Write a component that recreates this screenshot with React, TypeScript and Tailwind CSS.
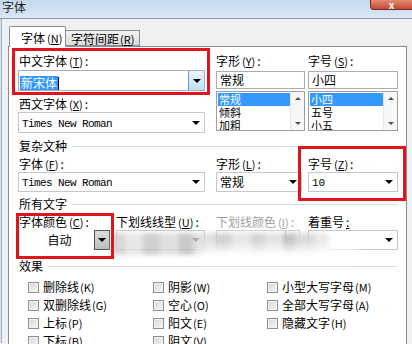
import React from 'react';

const cjk = "font-['Noto_Sans_CJK_SC','Noto_Sans_CJK_JP',sans-serif]";
const mono = "font-['Liberation_Mono',monospace]";

function Label({ text, k, colon = true, disabled = false }: { text: string; k?: string; colon?: boolean; disabled?: boolean }) {
  return (
    <div className={`h-[14px] leading-[14px] text-[12px] whitespace-nowrap ${disabled ? 'text-[#a0a0a0]' : 'text-black'}`}>
      {text}
      {k && (
        <span className="text-[11px] ml-[2px]">
          (<span className="underline">{k}</span>)
        </span>
      )}
      {colon && <span className="ml-[2px]">:</span>}
    </div>
  );
}

function Arrow() {
  return <span className="block w-0 h-0 border-l-[4px] border-r-[4px] border-t-[4px] border-l-transparent border-r-transparent border-t-black" />;
}

function UpArrow() {
  return <span className="block w-0 h-0 border-l-[3px] border-r-[3px] border-b-[3px] border-l-transparent border-r-transparent border-b-[#505050]" />;
}

function DownArrow() {
  return <span className="block w-0 h-0 border-l-[3px] border-r-[3px] border-t-[3px] border-l-transparent border-r-transparent border-t-[#505050]" />;
}

function Combo({ children, h = 'h-[20px]', className = '' }: { children?: React.ReactNode; h?: string; className?: string }) {
  return (
    <div className={`flex items-center ${h} border border-[#c5c7cc] bg-white ${className}`}>
      <div className="flex-1 pl-[3px] text-[12px] leading-[14px] overflow-hidden whitespace-nowrap">{children}</div>
      <div className="w-[16px] flex justify-center">
        <Arrow />
      </div>
    </div>
  );
}

function ListBox({ items }: { items: string[] }) {
  return (
    <div className="flex h-[40px] border border-[#9a9ea6] bg-white">
      <div className="flex-1 pt-[1px] pl-[1px] overflow-hidden">
        {items.map((it, i) => (
          <div
            key={it}
            className={`h-[13px] leading-[13px] text-[11px] pl-[1px] overflow-hidden ${i === 0 ? 'bg-[#3399ff] text-white' : 'text-black'}`}
          >
            {it}
          </div>
        ))}
      </div>
      <div className="w-[14px] flex flex-col justify-between items-center py-[5px] bg-[#f7f7f7] border-l border-[#e6e6e6]">
        <UpArrow />
        <DownArrow />
      </div>
    </div>
  );
}

function GroupHeader({ text }: { text: string }) {
  return (
    <div className="flex items-center h-[14px] pl-[10px] pr-[9px]">
      <span className="text-[12px] leading-[14px] text-black">{text}</span>
      <span className="flex-1 h-px bg-[#d8dde2] ml-[5px]" />
    </div>
  );
}

function Check({ text, k }: { text: string; k: string }) {
  return (
    <div className="flex items-center h-[18px] gap-[4px]">
      <span className="w-[11px] h-[11px] border border-[#8e8f8f] bg-gradient-to-br from-[#d6d6d6] to-[#f6f6f6] shadow-[inset_0_0_0_1px_#f4f4f4]" />
      <span className="text-[12px] leading-[14px] whitespace-nowrap">
        {text}
        <span className="text-[11px] ml-[1px]">({k})</span>
      </span>
    </div>
  );
}

export default function App() {
  return (
    <div className={`relative w-[412px] h-[344px] overflow-hidden bg-[#f0f0f0] ${cjk}`}>
      {/* title bar */}
      <div className="flex justify-between items-start h-[19px] bg-gradient-to-b from-[#c4d8ee] to-[#dae7f5] border-b border-[#8a9bb0]">
        <span className="pl-[2px] text-[12px] leading-[14px] text-[#1e1e1e]">字体</span>
        <div className="w-[42px] h-[10px] rounded-bl-[4px] bg-gradient-to-b from-[#e48a73] to-[#c24a34] border-l border-b border-[#7a2e22] flex justify-center items-end">
          <span className="text-white text-[10px] leading-[9px] font-bold">x</span>
        </div>
      </div>

      {/* body */}
      <div className="flex h-[324px]">
        <div className="w-[2px] bg-[#d1e1f2] border-r border-[#a8b4c2]" />
        <div className="flex-1 pl-[6px] pr-[5px] pt-[7px] flex flex-col">
          {/* tabs */}
          <div className="flex items-end h-[20px] pl-[1px] relative z-10">
            <div className="w-[57px] h-[21px] bg-white border border-b-0 border-[#898c95] rounded-t-[2px] pl-[11px] pt-[4px] text-[12px] leading-[14px] -mb-px">
              字体<span className="text-[11px] ml-[2px]">(<span className="underline">N</span>)</span>
            </div>
            <div className="w-[74px] h-[16px] bg-gradient-to-b from-[#f2f2f2] to-[#dcdcdc] border border-l-0 border-[#898c95] pl-[5px] text-[12px] leading-[15px]">
              字符间距<span className="text-[11px] ml-[1px]">(<span className="underline">R</span>)</span>
            </div>
          </div>

          {/* panel */}
          <div className="relative flex-1 bg-white border border-[#898c95] border-b-0">
            {/* section A */}
            <div className="flex pt-[7px] pl-[9px]">
              <div className="w-[187px] flex flex-col">
                <div className="pl-[1px]">
                  <Label text="中文字体" k="T" />
                </div>
                <div className="mt-[2px] h-[21px] flex items-center border border-[#abadb3] bg-white">
                  <div className="flex-1 pl-[1px]">
                    <span className="inline-block bg-[#3399ff] text-white text-[12px] leading-[14px] px-[1px]">新宋体</span>
                    <span className="inline-block w-px h-[13px] bg-black align-middle" />
                  </div>
                  <div className="w-[16px] h-[19px] flex justify-center items-center bg-gradient-to-b from-[#e8f5fd] to-[#c1e0f4] border-l border-[#5d9cce]">
                    <Arrow />
                  </div>
                </div>
                <div className="mt-[6px] pl-[1px]">
                  <Label text="西文字体" k="X" />
                </div>
                <Combo h="h-[21px]" className="mt-[1px]">
                  <span className={`${mono} text-[11px] tracking-[-0.6px]`}>Times New Roman</span>
                </Combo>
              </div>

              <div className="w-[89px] ml-[11px] flex flex-col">
                <Label text="字形" k="Y" />
                <div className="mt-[3px] h-[18px] border border-[#abadb3] pl-[3px] text-[12px] leading-[16px]">常规</div>
                <div className="mt-[2px]">
                  <ListBox items={['常规', '倾斜', '加粗']} />
                </div>
              </div>

              <div className="w-[90px] ml-[3px] flex flex-col">
                <Label text="字号" k="S" />
                <div className="mt-[3px] h-[18px] border border-[#abadb3] pl-[3px] text-[12px] leading-[16px]">小四</div>
                <div className="mt-[2px]">
                  <ListBox items={['小四', '五号', '小五']} />
                </div>
              </div>
            </div>

            {/* 复杂文种 */}
            <div className="mt-[6px]">
              <GroupHeader text="复杂文种" />
            </div>
            <div className="flex mt-[4px] pl-[9px]">
              <div className="w-[187px]">
                <div className="pl-[1px]">
                  <Label text="字体" k="F" />
                </div>
                <Combo className="mt-[1px]">
                  <span className={`${mono} text-[11px] tracking-[-0.6px]`}>Times New Roman</span>
                </Combo>
              </div>
              <div className="w-[86px] ml-[11px]">
                <Label text="字形" k="L" />
                <Combo className="mt-[1px]">常规</Combo>
              </div>
              <div className="w-[90px] ml-[6px]">
                <Label text="字号" k="Z" />
                <Combo className="mt-[1px]">
                  <span className={`${mono} text-[11px]`}>10</span>
                </Combo>
              </div>
            </div>

            {/* 所有文字 */}
            <div className="mt-[5px]">
              <GroupHeader text="所有文字" />
            </div>
            <div className="flex mt-[4px] pl-[10px]">
              <div className="w-[91px]">
                <Label text="字体颜色" k="C" />
                <div className="mt-[1px] h-[20px] flex items-center">
                  <div className="flex-1 text-center text-[12px] leading-[14px] pl-[6px]">自动</div>
                  <div className="w-[16px] h-[20px] flex justify-center items-center bg-gradient-to-b from-[#dcdcdc] to-[#bdbdbd] border border-[#555]">
                    <Arrow />
                  </div>
                </div>
              </div>
              <div className="w-[89px] ml-[6px]">
                <Label text="下划线线型" k="U" />
                <Combo className="mt-[1px]" />
              </div>
              <div className="w-[84px] ml-[11px]">
                <Label text="下划线颜色" k="I" disabled />
                <div className="mt-[1px] h-[20px] flex border border-[#d0d0d0]">
                  <div className="flex-1" />
                  <div className="w-[14px] border-l border-[#d0d0d0]" />
                </div>
              </div>
              <div className="w-[90px] ml-[8px]">
                <div className="h-[14px] leading-[14px] text-[12px] whitespace-nowrap">
                  着重号<span className="underline ml-[2px]">:</span>
                </div>
                <Combo className="mt-[1px]" />
              </div>
            </div>

            {/* 效果 */}
            <div className="mt-[9px]">
              <GroupHeader text="效果" />
            </div>
            <div className="flex mt-[5px] pl-[19px]">
              <div className="w-[125px]">
                <Check text="删除线" k="K" />
                <Check text="双删除线" k="G" />
                <Check text="上标" k="P" />
                <Check text="下标" k="B" />
              </div>
              <div className="w-[114px]">
                <Check text="阴影" k="W" />
                <Check text="空心" k="O" />
                <Check text="阳文" k="E" />
                <Check text="阴文" k="V" />
              </div>
              <div>
                <Check text="小型大写字母" k="M" />
                <Check text="全部大写字母" k="A" />
                <Check text="隐藏文字" k="H" />
              </div>
            </div>

            {/* blurred watermark */}
            <div className="absolute left-[102px] top-[186px] flex blur-[2px] opacity-80">
              <span className="w-[14px] h-[22px] bg-[#cfcfcf]" />
              <span className="w-[18px] h-[22px] bg-[#e2e2e2]" />
              <span className="w-[16px] h-[22px] bg-[#c4c4c4]" />
              <span className="w-[20px] h-[22px] bg-[#d8d8d8]" />
              <span className="w-[14px] h-[22px] bg-[#bcbcbc]" />
              <span className="w-[22px] h-[22px] bg-[#dadada]" />
              <span className="w-[16px] h-[22px] bg-[#c8c8c8]" />
              <span className="w-[20px] h-[22px] bg-[#e0e0e0]" />
              <span className="w-[14px] h-[22px] bg-[#cbcbcb]" />
              <span className="w-[18px] h-[22px] bg-[#dedede]" />
              <span className="w-[12px] h-[22px] bg-[#b8b8b8]" />
              <span className="w-[20px] h-[22px] bg-[#d4d4d4]" />
              <span className="w-[14px] h-[22px] bg-[#e6e6e6]" />
            </div>
            <div className="absolute left-[190px] top-[200px] w-[160px] h-[16px] rounded-full bg-white/90 blur-[4px]" />

            {/* red annotation boxes */}
            <div className="absolute left-[3px] top-[1px] w-[198px] h-[47px] border-[3px] border-[#e0151b]" />
            <div className="absolute left-[289px] top-[99px] w-[108px] h-[55px] border-[3px] border-[#e0151b]" />
            <div className="absolute left-[7px] top-[166px] w-[98px] h-[46px] border-[3px] border-[#e0151b]" />
          </div>
        </div>
      </div>
    </div>
  );
}
